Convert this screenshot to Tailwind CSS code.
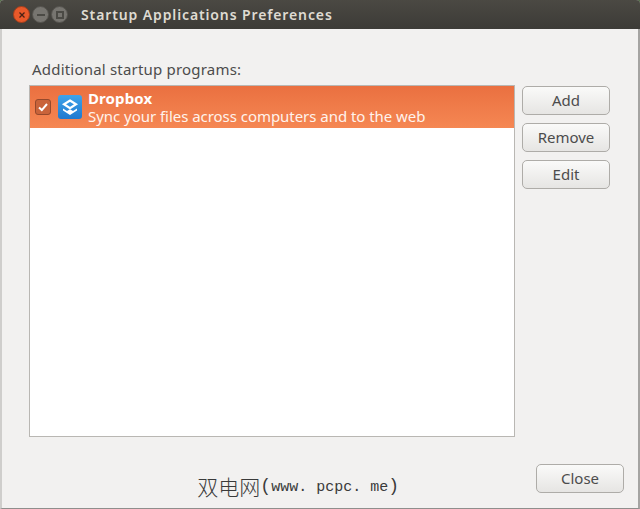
<!doctype html>
<html lang="en">
<head>
    <meta charset="UTF-8" />
    <title>Startup Applications Preferences</title>
    <script src="https://cdn.jsdelivr.net/npm/@tailwindcss/browser@4"></script>
</head>
<body class="w-[640px] h-[509px] overflow-hidden bg-[#55704a] font-['Noto_Sans',sans-serif]">
    <div class="flex flex-col w-full h-full rounded-t-[4px] bg-[#f2f1f0] border-l-2 border-l-[#cfcecc] border-r-2 border-r-[#a5a4a2] border-b border-b-[#8f8e8c]">
        <!-- title bar -->
        <header class="flex items-center h-[29px] shrink-0 -ml-[2px] -mr-[2px] rounded-t-[4px] bg-gradient-to-b from-[#4b4943] to-[#3c3b37]">
            <div class="flex items-center gap-[2px] ml-[13px]">
                <div class="flex items-center justify-center size-[17px] rounded-full bg-[#e9592a] border border-[#a53f1c]">
                    <svg width="8" height="8" viewBox="0 0 8 8"><path d="M1.5 1.5l5 5M6.5 1.5l-5 5" stroke="#4a2114" stroke-width="1.3"/></svg>
                </div>
                <div class="flex items-center justify-center size-[17px] rounded-full bg-[#777570] border border-[#55534e]">
                    <div class="w-[8px] h-[2px] bg-[#4b4a45]"></div>
                </div>
                <div class="flex items-center justify-center size-[17px] rounded-full bg-[#777570] border border-[#55534e]">
                    <div class="size-[8px] border-2 border-[#4b4a45]"></div>
                </div>
            </div>
            <h1 class="ml-[13px] text-[14px] font-semibold tracking-[0.88px] text-[#dfdbd2] leading-none">Startup Applications Preferences</h1>
        </header>

        <main class="flex flex-col flex-1 pl-[27px] pr-[14px] pt-[31px]">
            <div class="flex gap-[7px] pr-[14px]">
                <div class="flex flex-col flex-1">
                    <p class="ml-[3px] text-[15px] leading-[18px] tracking-[0.2px] text-[#4c4c4c]">Additional startup programs:</p>
                    <div class="mt-[7px] h-[352px] bg-white border border-[#b9b7b3]">
                        <div class="flex items-center h-[42px] bg-gradient-to-b from-[#ea7040] to-[#f58753] text-white">
                            <div class="flex items-center justify-center size-[16px] ml-[5px] rounded-[3px] bg-[#c9633a] border border-[#96492c]">
                                <svg width="12" height="12" viewBox="0 0 12 12"><path d="M2 6.5l2.8 2.6L10 3" fill="none" stroke="#fff" stroke-width="2"/></svg>
                            </div>
                            <div class="flex items-center justify-center size-[24px] ml-[7px] rounded-[3px] bg-gradient-to-b from-[#3fa3ea] to-[#1f79cf]">
                                <svg width="20" height="20" viewBox="0 0 20 20"><path d="M10 3.5l6 3.8-6 3.8-6-3.8z" fill="none" stroke="#fff" stroke-width="2.2"/><path d="M3 11.5l4 2.5 3-1.8 3 1.8 4-2.5v2L10 18l-7-4.5z" fill="#fff"/></svg>
                            </div>
                            <div class="ml-[6px] -mt-[1px] flex flex-col">
                                <span class="text-[15px] leading-[18px] font-bold tracking-[0.1px]">Dropbox</span>
                                <span class="text-[15px] leading-[18px] tracking-[-0.04px] text-[#fff3ec]">Sync your files across computers and to the web</span>
                            </div>
                        </div>
                    </div>
                </div>
                <div class="flex flex-col gap-[8px] w-[88px] pt-[26px]">
                    <button class="h-[29px] rounded-[5px] border border-[#aeaca8] bg-gradient-to-b from-[#fafaf9] to-[#e6e5e3] text-[15px] text-[#4c4c4c]">Add</button>
                    <button class="h-[29px] rounded-[5px] border border-[#aeaca8] bg-gradient-to-b from-[#fafaf9] to-[#e6e5e3] text-[15px] text-[#4c4c4c]">Remove</button>
                    <button class="h-[29px] rounded-[5px] border border-[#aeaca8] bg-gradient-to-b from-[#fafaf9] to-[#e6e5e3] text-[15px] text-[#4c4c4c]">Edit</button>
                </div>
            </div>
            <div class="flex items-end justify-end mt-[27px]">
                <p class="flex items-center mr-[137px] -mb-[3px] h-[20px] text-[#3a3a3a]">
                    <span class="text-[21px] leading-none font-light font-['Noto_Sans_CJK_SC',sans-serif]">双电网</span>
                    <span class="text-[18px] leading-none font-['Liberation_Mono',monospace]">(<span class="text-[15px]">www. pcpc. me</span>)</span>
                </p>
                <button class="w-[88px] h-[29px] rounded-[5px] border border-[#aeaca8] bg-gradient-to-b from-[#fafaf9] to-[#e6e5e3] text-[15px] text-[#4c4c4c]">Close</button>
            </div>
        </main>
    </div>
</body>
</html>
